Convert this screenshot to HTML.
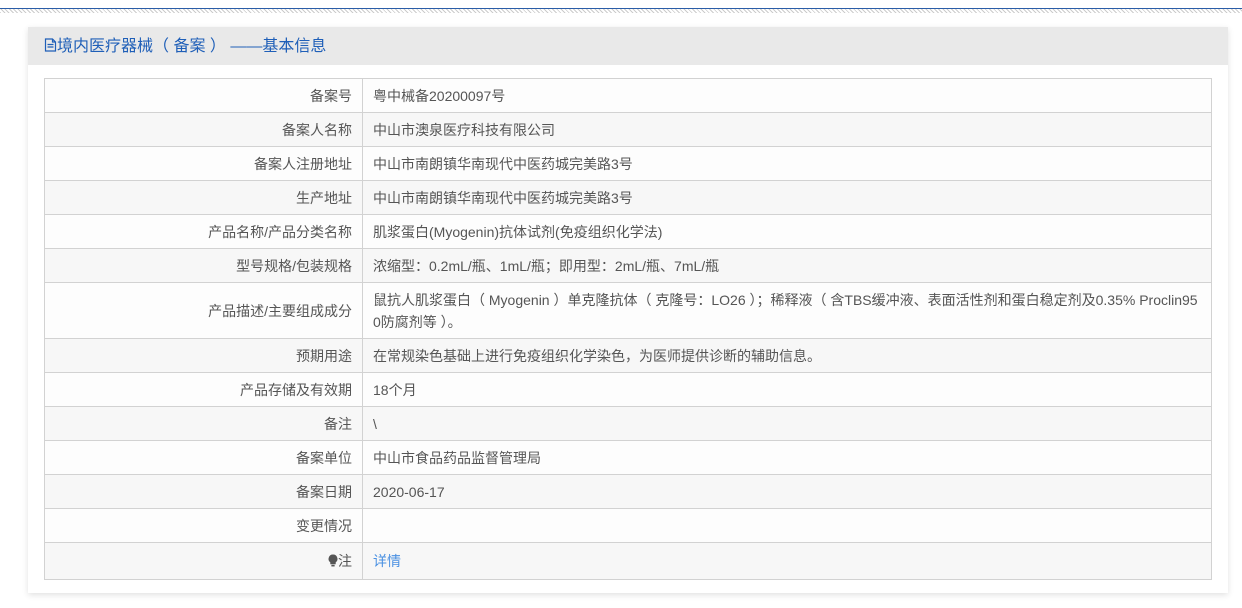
<!DOCTYPE html>
<html><head><meta charset="utf-8"><style>
body{margin:0;width:1242px;height:608px;background:#fff;font-family:"Liberation Sans","Noto Sans CJK SC",sans-serif;position:relative;overflow:hidden}
.topline{position:absolute;left:0;top:8px;width:1242px;height:1px;background:#2a5da8}
.hatch{position:absolute;left:0;top:9px;width:1242px;height:4px;background:repeating-linear-gradient(45deg,#ccc 0 1px,#fff 1px 3px)}
.panel{position:absolute;left:28px;top:27px;width:1200px;height:566px;background:#fff;box-shadow:0 2px 6px rgba(0,0,0,.12)}
.hd{height:38px;background:#e9e9e9;color:#1f5fb8;font-size:16px;line-height:40px;padding-left:16px}
table{position:absolute;left:16px;top:51px;width:1168px;border-collapse:collapse;font-size:14px;color:#555;table-layout:fixed}
td{border:1px solid #d2d2d2;height:33px;padding:0 10px;line-height:22px;word-break:break-all}
td.k{width:297px;text-align:right}
tr:nth-child(odd){background:#fdfdfd}
tr:nth-child(even){background:#f7f7f7}
a{color:#4a90e2;text-decoration:none}
</style></head><body>
<div class="topline"></div><div class="hatch"></div>
<div class="panel">
<div class="hd"><svg width="13" height="14" viewBox="0 0 13 14" style="vertical-align:-1px"><path d="M1.5 1h7l3 3v9h-10z M8.5 1v3h3 M3.5 6.5h6 M3.5 9h6" fill="none" stroke="#1f5fb8" stroke-width="1.2"/></svg>境内医疗器械（ 备案 ） ——基本信息</div>
<table>
<tr><td class="k">备案号</td><td>粤中械备20200097号</td></tr>
<tr><td class="k">备案人名称</td><td>中山市澳泉医疗科技有限公司</td></tr>
<tr><td class="k">备案人注册地址</td><td>中山市南朗镇华南现代中医药城完美路3号</td></tr>
<tr><td class="k">生产地址</td><td>中山市南朗镇华南现代中医药城完美路3号</td></tr>
<tr><td class="k">产品名称/产品分类名称</td><td>肌浆蛋白(Myogenin)抗体试剂(免疫组织化学法)</td></tr>
<tr><td class="k">型号规格/包装规格</td><td>浓缩型：0.2mL/瓶、1mL/瓶；即用型：2mL/瓶、7mL/瓶</td></tr>
<tr><td class="k" style="height:55px">产品描述/主要组成成分</td><td>鼠抗人肌浆蛋白（ Myogenin ）单克隆抗体（ 克隆号：LO26 ）；稀释液（ 含TBS缓冲液、表面活性剂和蛋白稳定剂及0.35% Proclin950防腐剂等 ）。</td></tr>
<tr><td class="k">预期用途</td><td>在常规染色基础上进行免疫组织化学染色，为医师提供诊断的辅助信息。</td></tr>
<tr><td class="k">产品存储及有效期</td><td>18个月</td></tr>
<tr><td class="k">备注</td><td>\</td></tr>
<tr><td class="k">备案单位</td><td>中山市食品药品监督管理局</td></tr>
<tr><td class="k">备案日期</td><td>2020-06-17</td></tr>
<tr><td class="k">变更情况</td><td></td></tr>
<tr><td class="k" style="height:36px"><svg width="10" height="13" viewBox="0 0 9 12" style="vertical-align:-1px"><path d="M4.5 0.5a4 4 0 0 1 2.5 7.2v1.8h-5v-1.8a4 4 0 0 1 2.5-7.2z" fill="#555"/><rect x="3" y="10" width="3" height="1.5" fill="#555"/></svg>注</td><td><a>详情</a></td></tr>
</table>
</div>
</body></html>
